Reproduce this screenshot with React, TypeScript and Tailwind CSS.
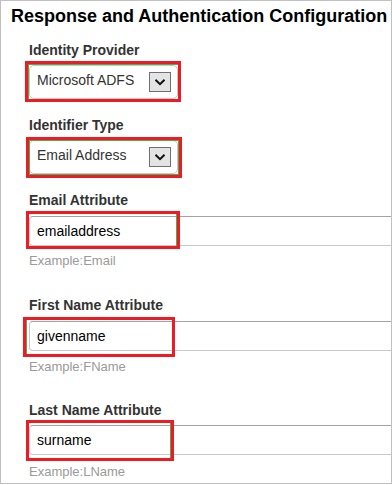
import React from "react";

function Chevron() {
  return (
    <svg width="10" height="7" viewBox="0 0 10 7" fill="none">
      <path d="M1.2 1.5 L5 5.2 L8.8 1.5" stroke="#111" strokeWidth="2" strokeLinecap="square" />
    </svg>
  );
}

function Label({ children, className }: { children: React.ReactNode; className: string }) {
  return (
    <div className={"text-[14px] leading-[16px] font-bold text-[#333] " + className}>{children}</div>
  );
}

function Example({ children, className }: { children: React.ReactNode; className: string }) {
  return <div className={"text-[13px] leading-[15px] text-[#9a9a9a] " + className}>{children}</div>;
}

function RedBox({ pos, green }: { pos: string; green: string }) {
  return (
    <div className={"absolute border-[3px] border-[#ed1c24] pointer-events-none " + pos}>
      <div className={"absolute inset-0 border-[#4cae4f] " + green} />
    </div>
  );
}

function SelectBox({
  value,
  className,
  pos,
  green,
}: {
  value: string;
  className: string;
  pos: string;
  green: string;
}) {
  return (
    <div className={"relative w-[149px] h-[34px] " + className}>
      <div className="w-full h-full rounded-[5px] border border-[#c8c8c8] bg-white flex items-start justify-between pl-[7px] pr-[6px]">
        <span className="mt-[6px] text-[14px] leading-[16px] text-[#333]">{value}</span>
        <span className="mt-[6px] w-[22px] h-[20px] bg-[#e4e4e4] border border-[#707070] flex items-center justify-center">
          <Chevron />
        </span>
      </div>
      <RedBox pos={pos} green={green} />
    </div>
  );
}

function TextInput({
  value,
  className,
  pos,
  green,
}: {
  value: string;
  className: string;
  pos: string;
  green: string;
}) {
  return (
    <div className={"relative h-[30px] " + className}>
      <div className="h-full rounded-l-[4px] border border-[#c8c8c8] border-t-[#a3a3a3] border-r-0 bg-white pl-[7px] text-[14px] leading-[28px] text-black">
        {value}
      </div>
      <RedBox pos={pos} green={green} />
    </div>
  );
}

export default function App() {
  return (
    <div className="w-[392px] h-[485px] bg-white font-['Liberation_Sans',Arial,sans-serif]">
      <div className="w-[392px] h-[484px] border border-[#c0c0c0] bg-white overflow-hidden">
        <div className="pt-[4px] pl-[10px] text-[18px] leading-[22px] font-bold text-black whitespace-nowrap">
          Response and Authentication Configuration
        </div>
        <div className="pl-[28px] flex flex-col">
          <Label className="mt-[15px]">Identity Provider</Label>
          <SelectBox
            value="Microsoft ADFS"
            className="mt-[7px]"
            pos="left-[-4px] top-[-4px] w-[156px] h-[41px]"
            green="border-l border-t"
          />

          <Label className="mt-[18px]">Identifier Type</Label>
          <SelectBox
            value="Email Address"
            className="mt-[7px]"
            pos="left-[-3px] top-[-3px] w-[156px] h-[41px]"
            green="border"
          />

          <Label className="mt-[18px]">Email Attribute</Label>
          <TextInput
            value="emailaddress"
            className="mt-[8px]"
            pos="left-[-3px] top-[-5px] w-[154px] h-[38px]"
            green="border-r"
          />
          <Example className="mt-[7px]">Example:Email</Example>

          <Label className="mt-[29px]">First Name Attribute</Label>
          <TextInput
            value="givenname"
            className="mt-[8px]"
            pos="left-[-6px] top-[-4px] w-[152px] h-[40px]"
            green="border-l"
          />
          <Example className="mt-[8px]">Example:FName</Example>

          <Label className="mt-[28px]">Last Name Attribute</Label>
          <TextInput
            value="surname"
            className="mt-[7px]"
            pos="left-[-3px] top-[-5px] w-[148px] h-[41px]"
            green="border-r"
          />
          <Example className="mt-[9px]">Example:LName</Example>
        </div>
      </div>
    </div>
  );
}
